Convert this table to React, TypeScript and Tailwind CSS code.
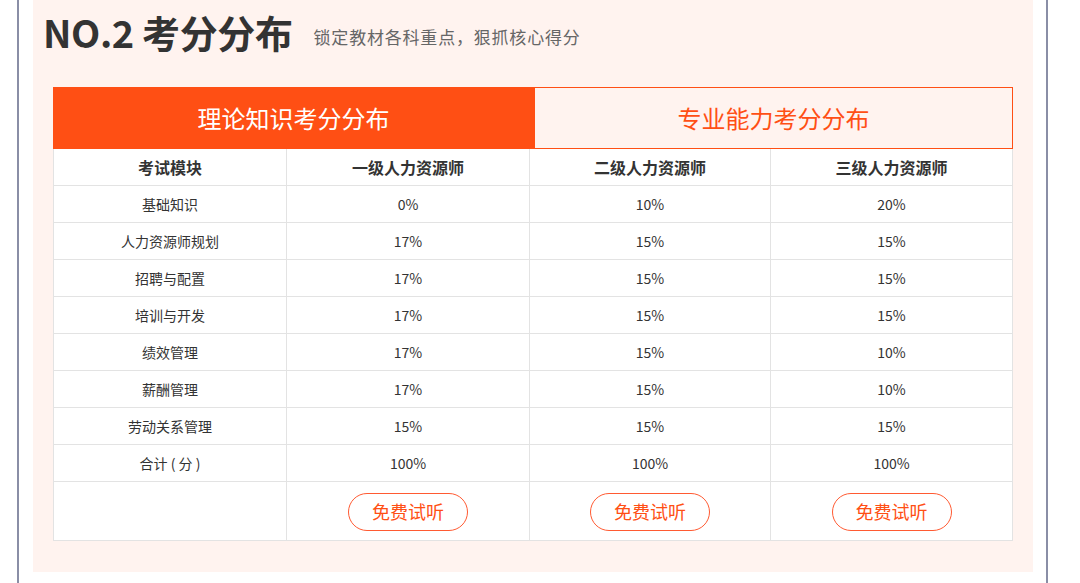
import React from 'react';

const font = { fontFamily: '"Noto Sans CJK SC", "Noto Sans", sans-serif' };

const LEVELS = ['一级人力资源师', '二级人力资源师', '三级人力资源师'];

const ROWS: [string, string, string, string][] = [
  ['基础知识', '0%', '10%', '20%'],
  ['人力资源师规划', '17%', '15%', '15%'],
  ['招聘与配置', '17%', '15%', '15%'],
  ['培训与开发', '17%', '15%', '15%'],
  ['绩效管理', '17%', '15%', '10%'],
  ['薪酬管理', '17%', '15%', '10%'],
  ['劳动关系管理', '15%', '15%', '15%'],
  ['合计 ( 分 )', '100%', '100%', '100%'],
];

const COLS = 'grid grid-cols-[233px_243px_241px_242px]';
const cell = 'flex items-center justify-center border-r border-b border-[#e3e3e3]';

export default function App() {
  return (
    <div className="w-[1080px] h-[583px] bg-white overflow-hidden" style={font}>
      <div className="ml-[17px] w-[1031px] h-full border-x-2 border-[#8a8ea6]">
        <div className="ml-[14px] w-[1000px] h-[572px] bg-[#fff3ef]">
          {/* Title */}
          <div className="flex items-end h-[87px] pl-[10px] pb-[36px]">
            <h2 className="text-[38px] leading-none font-bold text-[#333] tracking-[-0.4px]">NO.2 考分分布</h2>
            <span className="ml-[21px] mb-[6px] text-[17px] leading-none text-[#666] tracking-[0.8px]">锁定教材各科重点，狠抓核心得分</span>
          </div>

          <div className="ml-[20px] w-[960px]">
            {/* Tabs */}
            <div className="flex h-[62px]">
              <div className="w-[481px] bg-[#ff4f14] flex items-center justify-center text-white text-[24px]">
                理论知识考分分布
              </div>
              <div className="w-[479px] border border-[#ff4f14] bg-[#fff3ef] flex items-center justify-center text-[#ff4f14] text-[24px]">
                专业能力考分分布
              </div>
            </div>

            {/* Table */}
            <div className="bg-white border-l border-[#e3e3e3]">
              <div className={`${COLS} h-[37px] text-[16px] font-bold text-[#333]`}>
                <div className={cell}>考试模块</div>
                {LEVELS.map((l) => (
                  <div key={l} className={cell}>{l}</div>
                ))}
              </div>
              {ROWS.map((r) => (
                <div key={r[0]} className={`${COLS} h-[37px] text-[14px] text-[#333]`}>
                  {r.map((v, i) => (
                    <div key={i} className={cell}>{v}</div>
                  ))}
                </div>
              ))}
              <div className={`${COLS} h-[59px]`}>
                <div className={cell}></div>
                {LEVELS.map((l) => (
                  <div key={l} className={cell}>
                    <button className="w-[120px] h-[38px] mt-[1px] rounded-full border border-[#ff5a32] text-[#ff4f14] text-[18px] bg-white">
                      免费试听
                    </button>
                  </div>
                ))}
              </div>
            </div>
          </div>
        </div>
      </div>
    </div>
  );
}
